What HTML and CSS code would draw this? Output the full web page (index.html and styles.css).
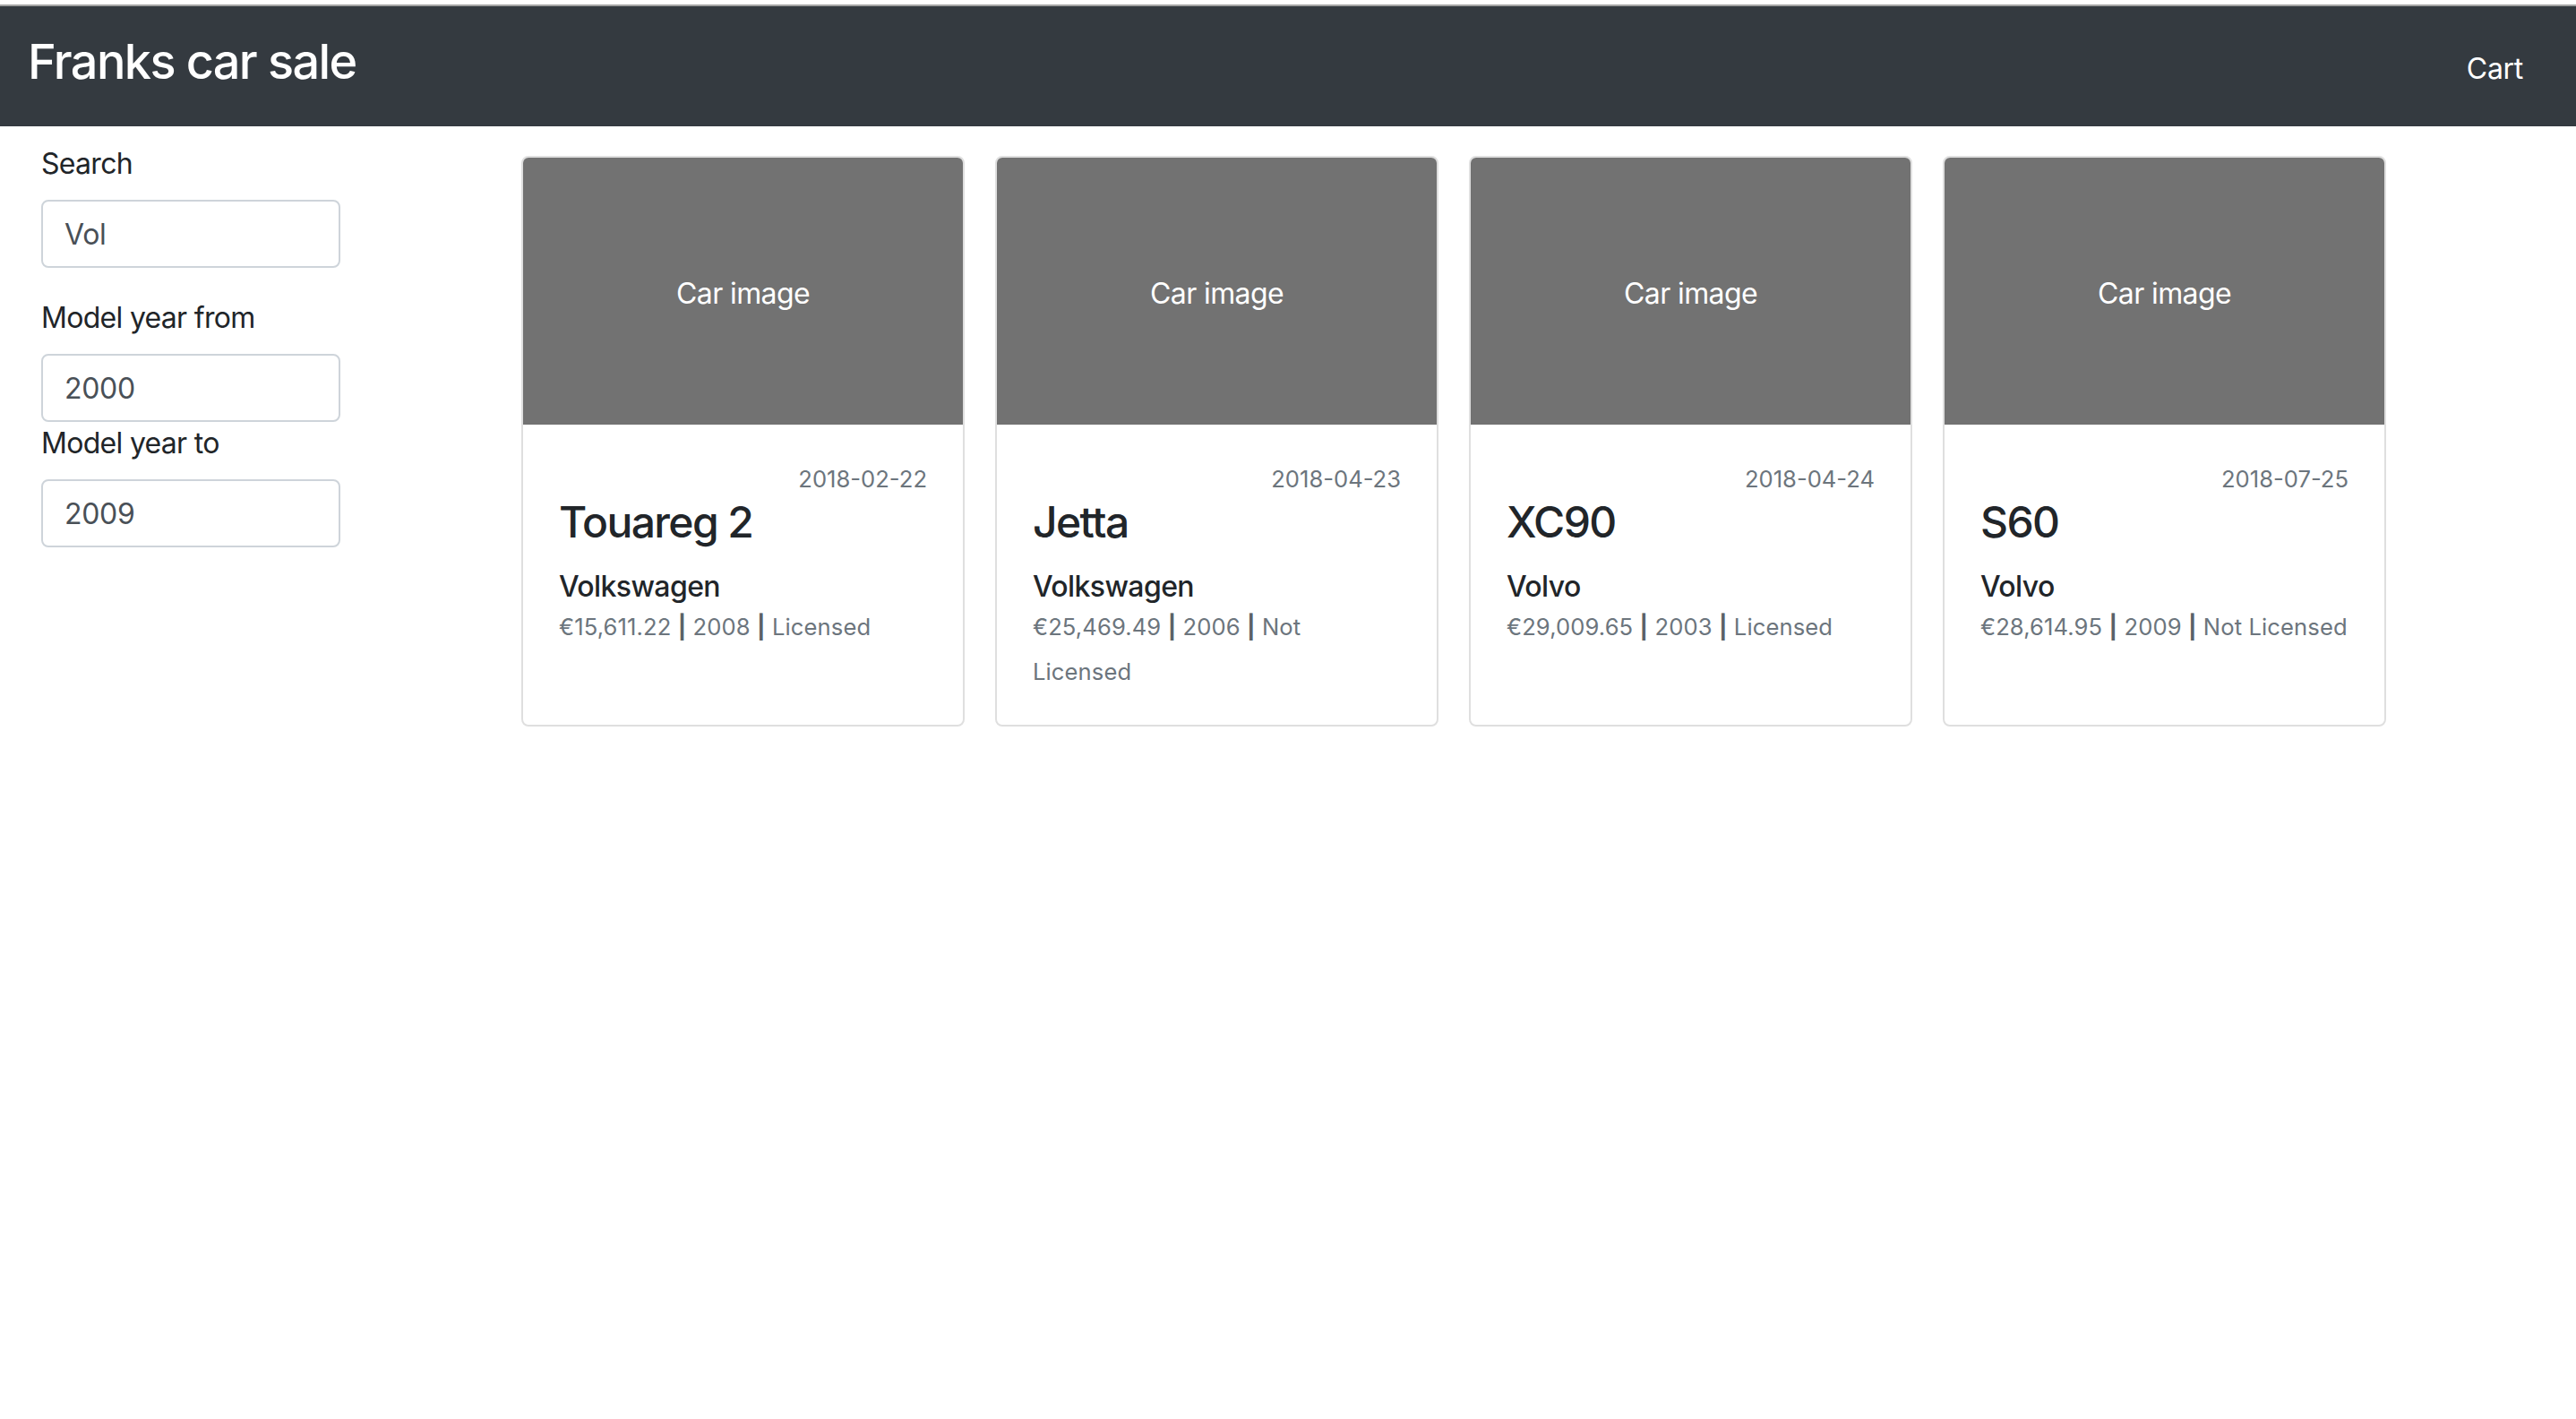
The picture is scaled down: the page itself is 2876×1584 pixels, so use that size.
FILE: index.html
```html
<!DOCTYPE html>
<html lang="en">
<head>
<meta charset="utf-8">
<title>Franks car sale</title>
<link rel="stylesheet" href="styles.css">
</head>
<body>
<div class="topline"></div>
<nav class="navbar">
  <a class="brand" href="#">Franks car sale</a>
  <a class="cart" href="#">Cart</a>
</nav>
<main class="main">
  <aside class="sidebar">
    <div class="group">
      <label class="label" for="search">Search</label>
      <input class="input" id="search" type="text" value="Vol">
    </div>
    <div class="group group-tight">
      <label class="label" for="from">Model year from</label>
      <input class="input" id="from" type="text" value="2000">
    </div>
    <div class="group">
      <label class="label" for="to">Model year to</label>
      <input class="input" id="to" type="text" value="2009">
    </div>
  </aside>
  <section class="cards">
    <article class="card">
      <div class="card-img">Car image</div>
      <div class="card-body">
        <div class="date">2018-02-22</div>
        <h4 class="card-title">Touareg 2</h4>
        <h6 class="card-subtitle">Volkswagen</h6>
        <p class="card-text"><small class="muted">€15,611.22 <b>|</b> 2008 <b>|</b> Licensed</small></p>
      </div>
    </article>
    <article class="card">
      <div class="card-img">Car image</div>
      <div class="card-body">
        <div class="date">2018-04-23</div>
        <h4 class="card-title">Jetta</h4>
        <h6 class="card-subtitle">Volkswagen</h6>
        <p class="card-text"><small class="muted">€25,469.49 <b>|</b> 2006 <b>|</b> Not Licensed</small></p>
      </div>
    </article>
    <article class="card">
      <div class="card-img">Car image</div>
      <div class="card-body">
        <div class="date">2018-04-24</div>
        <h4 class="card-title">XC90</h4>
        <h6 class="card-subtitle">Volvo</h6>
        <p class="card-text"><small class="muted">€29,009.65 <b>|</b> 2003 <b>|</b> Licensed</small></p>
      </div>
    </article>
    <article class="card">
      <div class="card-img">Car image</div>
      <div class="card-body">
        <div class="date">2018-07-25</div>
        <h4 class="card-title">S60</h4>
        <h6 class="card-subtitle">Volvo</h6>
        <p class="card-text"><small class="muted">€28,614.95 <b>|</b> 2009 <b>|</b> Not Licensed</small></p>
      </div>
    </article>
  </section>
</main>
</body>
</html>
```

FILE: styles.css
```css
* { box-sizing: border-box; }

html, body {
  margin: 0;
  padding: 0;
  background: #fff;
}

body {
  font-family: Inter, Roboto, "Liberation Sans", sans-serif;
  font-size: 32px;
  line-height: 1.5;
  color: #212529;
  padding-top: 5px;
}

.topline {
  height: 2px;
  background: #a2a2a2;
}

.navbar {
  display: flex;
  align-items: baseline;
  justify-content: space-between;
  height: 134px;
  padding: 20px 59px 0 31px;
  background: #343a40;
}

.brand {
  font-size: 54px;
  line-height: 84px;
  font-weight: 500;
  color: #fff;
  text-decoration: none;
  letter-spacing: -1.6px;
}

.cart {
  font-size: 32px;
  line-height: 48px;
  color: #fff;
  text-decoration: none;
  letter-spacing: -0.3px;
}

.main {
  display: flex;
  align-items: flex-start;
  padding: 18px 0 0 46px;
}

.sidebar {
  width: 334px;
  flex: none;
}

.group {
  display: flex;
  flex-direction: column;
  margin-bottom: 32px;
}

.group-tight {
  margin-bottom: 0;
}

.label {
  font-size: 32px;
  line-height: 48px;
  margin-bottom: 16px;
  letter-spacing: -0.7px;
}

.input {
  display: block;
  width: 334px;
  height: 76px;
  padding: 0 24px;
  font-family: inherit;
  font-size: 32px;
  color: #495057;
  background: #fff;
  border: 2px solid #ced4da;
  border-radius: 8px;
  outline: none;
  letter-spacing: -0.3px;
}

.cards {
  display: grid;
  grid-template-columns: repeat(4, 495px);
  column-gap: 34px;
  margin: 15px 0 0 202px;
}

.card {
  display: flex;
  flex-direction: column;
  border: 2px solid #dfdfdf;
  border-radius: 8px;
  background: #fff;
}

.card-img {
  height: 298px;
  display: flex;
  align-items: center;
  justify-content: center;
  padding-top: 6px;
  background: #727272;
  color: #fff;
  font-size: 32px;
  letter-spacing: -0.6px;
  border-radius: 6px 6px 0 0;
}

.card-body {
  padding: 42px 40px 35px;
}

.date {
  text-align: right;
  font-size: 25.6px;
  line-height: 38.4px;
  color: #6c757d;
}

.card-title {
  margin: 0 0 24px;
  font-size: 48px;
  line-height: 57.6px;
  font-weight: 500;
  color: #212529;
  letter-spacing: -1.6px;
}

.card-subtitle {
  margin: 0;
  font-size: 32px;
  line-height: 38.4px;
  font-weight: 500;
  color: #212529;
  letter-spacing: -0.6px;
}

.card-text {
  margin: 0;
  font-size: 32px;
  line-height: 48px;
}

.muted {
  font-size: 25.6px;
  color: #6c757d;
  letter-spacing: 0.1px;
}

.muted b {
  font-weight: 700;
  color: #5a6268;
}
```
